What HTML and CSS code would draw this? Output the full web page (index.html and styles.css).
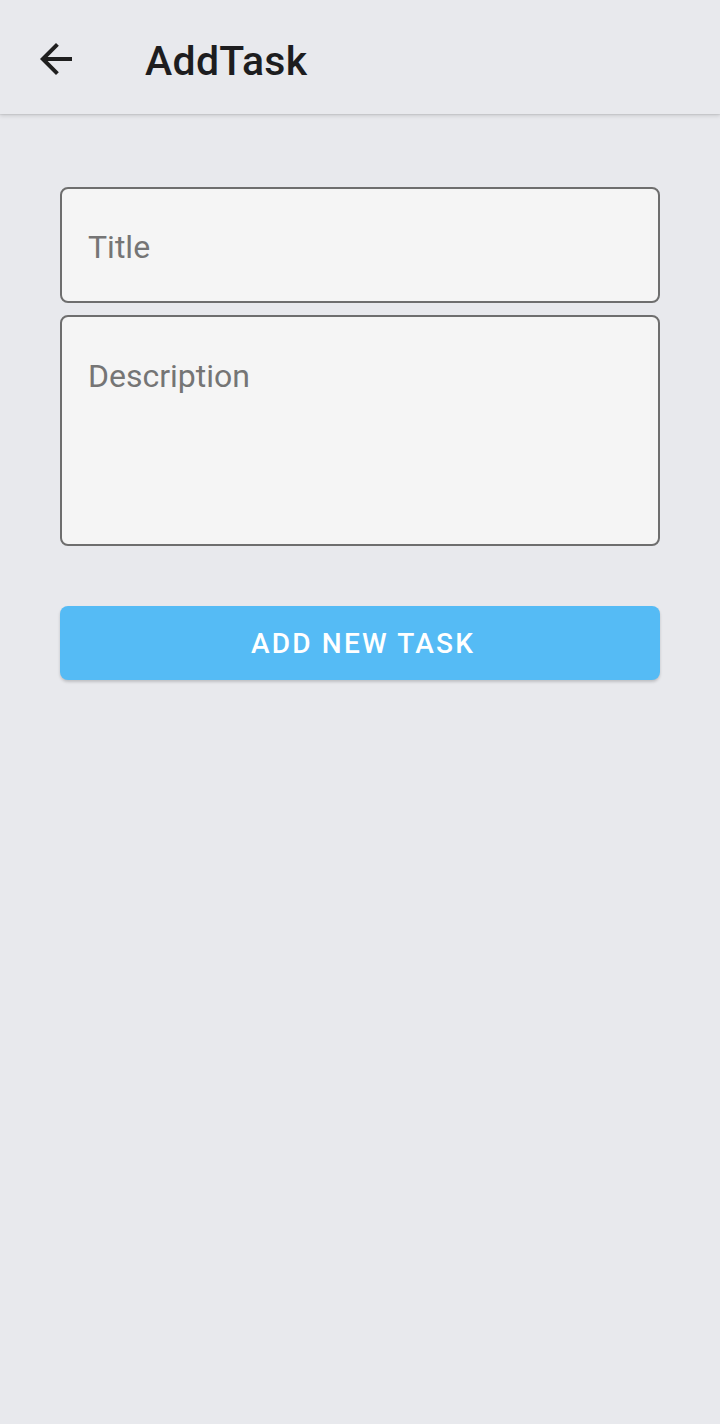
FILE: index.html
```html
<!DOCTYPE html>
<html>
<head>
<meta charset="utf-8">
<link rel="stylesheet" href="styles.css">
</head>
<body>
<header class="appbar">
  <button class="back" aria-label="Back">
    <svg viewBox="0 0 24 24" width="48" height="48"><path d="M20 11H7.83l5.59-5.59L12 4l-8 8 8 8 1.41-1.41L7.83 13H20v-2z" fill="#1f1f1f"/></svg>
  </button>
  <h1 class="title">AddTask</h1>
</header>
<main class="content">
  <div class="field field-title"><span class="placeholder">Title</span></div>
  <div class="field field-desc"><span class="placeholder">Description</span></div>
  <button class="add">ADD NEW TASK</button>
</main>
</body>
</html>
```
FILE: styles.css
```css
* { box-sizing: border-box; }
html, body { margin: 0; padding: 0; }
body {
  width: 720px;
  height: 1424px;
  background: #e8e9ed;
  font-family: Roboto, "Noto Sans", sans-serif;
  overflow: hidden;
}
.appbar {
  height: 114px;
  display: flex;
  align-items: center;
  background: #e8e9ed;
  box-shadow: 0 2px 4px rgba(0,0,0,0.12), 0 1px 1px rgba(0,0,0,0.06);
  position: relative;
  z-index: 1;
  padding-left: 32px;
}
.back {
  width: 48px;
  height: 48px;
  padding: 0;
  border: 0;
  background: none;
  display: flex;
  margin-top: 4px;
}
.title {
  margin: 0 0 0 65px;
  font-size: 41px;
  font-weight: 500;
  color: #1d1d1f;
  letter-spacing: 0.3px;
  padding-top: 8px;
}
.content {
  padding: 73px 60px 0;
  display: flex;
  flex-direction: column;
}
.field {
  background: #f5f5f5;
  border: 2px solid #6e6e6e;
  border-radius: 8px;
  padding: 0 26px;
}
.field-title {
  height: 116px;
  display: flex;
  align-items: center;
}
.field-desc {
  height: 231px;
  margin-top: 12px;
  padding-top: 39px;
}
.placeholder {
  font-size: 32px;
  color: #757575;
  line-height: 40px;
  display: block;
}
.field-title .placeholder { margin-top: 4px; }
.add {
  margin-top: 60px;
  height: 74px;
  border: 0;
  border-radius: 8px;
  background: #55bbf5;
  color: #ffffff;
  font-family: Roboto, "Noto Sans", sans-serif;
  font-size: 28px;
  font-weight: 500;
  letter-spacing: 2.2px;
  padding: 0 0 0 6px;
  box-shadow: 0 2px 3px rgba(0,0,0,0.18);
}
```
